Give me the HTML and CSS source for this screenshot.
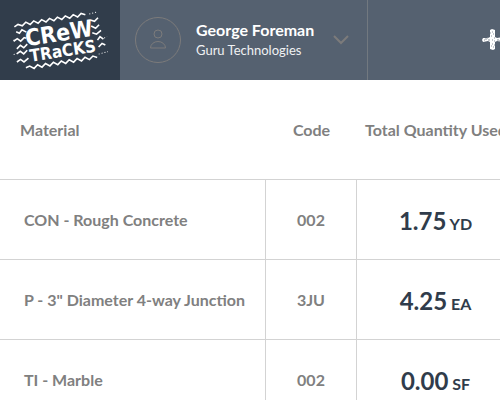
FILE: index.html
```html
<!DOCTYPE html>
<html lang="en">
<head>
    <meta charset="UTF-8">
    <meta name="viewport" content="width=device-width, initial-scale=1.0">
    <title>Crew Tracks - Materials</title>
    <link rel="stylesheet" href="styles.css">
</head>
<body>
    <header class="topbar">
        <a href="#" class="logo" aria-label="Crew Tracks">
            <svg width="96" height="64" viewBox="12 8 96 64">
                <g transform="rotate(-9 60 40)">
                    <text class="logo-crew" x="60" y="41" text-anchor="middle">CReW</text>
                    <text class="logo-tracks" x="61" y="57" text-anchor="middle">TRaCKS</text>
                    <g class="logo-waves">
                        <path d="M17 20l4-2 4 2 4-3 4 3 4-3 4 3 4-3 4 3 4-3 4 3 4-3 4 3 4-3 4 3 4-3 4 3 4-3 4 2"/>
                        <path d="M22 62l4-1 4 3 4-3 4 3 4-3 4 3 4-3 4 3 4-3 4 3 4-3 4 3 4-3 4 3 4-3 4 3 4-3 4 2"/>
                        <path d="M18 25l3 2 3-3 4 3M14 34l4-2 3 3 4-3 2 1M16 42l4-3 3 3 4-3M15 47l4-2 3 3 4-3M14 55l4-2 3 3 5-3"/>
                        <path d="M93 25l4 2 4-3M93 31l4 3 4-3M93 38l4 2 5-3M97 46l3-3 3 3M97 53l4-3 3 2"/>
                        <path class="speckle" d="M93 19l9-1M96 60l10-1M11 33h4M12 47h3M104 45l3-1"/>
                    </g>
                </g>
            </svg>
        </a>
        <button type="button" class="account">
            <svg class="avatar" width="48" height="48" viewBox="0 0 48 48">
                <circle cx="24" cy="24" r="22.5"/>
                <circle cx="24" cy="18" r="4"/>
                <path d="M16.500 32a7.500 6.500 0 0 1 15 0z"/>
            </svg>
            <span class="account-text">
                <span class="account-name">George Foreman</span>
                <span class="account-company">Guru Technologies</span>
            </span>
            <svg class="chevron" width="16" height="10" viewBox="0 0 16 10">
                <path d="M1 1l7 7 7-7"/>
            </svg>
        </button>
        <button type="button" class="add" aria-label="Add">
            <svg width="22" height="22" viewBox="0 0 22 22">
                <path d="M8 1l2-1 3 1v7l2 1 5-1 2 2-1 3-6-1-2 1v7l-2 1-3-1v-7l-2-1-5 1-1-2 1-2 5 0 2-1z" fill="#fff"/>
                <path class="grain" d="M10 3h1M11 5h1M9 7h1M3 10h2M6 11h2M10 11h1M12 9h1M15 11h2M18 10h1M10 15h1M11 18h1M9 17h1M2 11h1M12 12h1M8 4h1M12 16h1M5 9h1M17 12h2"/>
            </svg>
        </button>
    </header>

    <main class="content">
        <table class="materials">
            <thead>
                <tr>
                    <th class="col-material">Material</th>
                    <th class="col-code">Code</th>
                    <th class="col-total">Total Quantity Used</th>
                </tr>
            </thead>
            <tbody>
                <tr>
                    <td>CON - Rough Concrete</td>
                    <td>002</td>
                    <td><span class="amount">1.75</span> YD</td>
                </tr>
                <tr>
                    <td>P - 3" Diameter 4-way Junction</td>
                    <td>3JU</td>
                    <td><span class="amount">4.25</span> EA</td>
                </tr>
                <tr>
                    <td>TI - Marble</td>
                    <td>002</td>
                    <td><span class="amount">0.00</span> SF</td>
                </tr>
            </tbody>
        </table>
    </main>
</body>
</html>
```

FILE: styles.css
```css
* {
    margin: 0;
    padding: 0;
    box-sizing: border-box;
}

body {
    font-family: Lato, sans-serif;
    font-size: 16px;
    color: #808080;
    background-color: #fff;
    overflow: hidden;
}

button {
    font-family: inherit;
    background: none;
    border: none;
    cursor: pointer;
}

/* Top bar */
.topbar {
    display: flex;
    height: 80px;
    background-color: #556170;
    overflow: hidden;
}

.logo {
    flex: none;
    display: flex;
    align-items: center;
    justify-content: center;
    width: 120px;
    background-color: #313d4b;
}

.logo-crew,
.logo-tracks {
    font-family: "DejaVu Sans Condensed", "DejaVu Sans", sans-serif;
    font-weight: bold;
    fill: #fff;
}

.logo-crew {
    font-size: 23px;
}

.logo-tracks {
    font-size: 17px;
}

.logo-waves {
    fill: none;
    stroke: #fff;
    stroke-width: 1.6;
}

.speckle {
    stroke-width: 1;
    stroke-dasharray: 1 2;
}

.account {
    flex: none;
    display: flex;
    align-items: center;
    width: 248px;
    padding: 0 18px 0 14px;
    border-right: 1px solid #727980;
    text-align: left;
    color: #fff;
}

.avatar,
.chevron {
    flex: none;
    fill: none;
    stroke: #7c7b7b;
}

.chevron {
    stroke-width: 2;
}

.account-text {
    flex: 1;
    padding-left: 14px;
}

.account-name,
.account-company {
    display: block;
    line-height: 20px;
    white-space: nowrap;
}

.account-name {
    font-size: 16px;
    font-weight: bold;
}

.account-company {
    font-size: 13px;
    color: #f0f1f3;
}

.add {
    flex: none;
    display: flex;
    align-items: center;
    padding: 0 114px;
}

.grain {
    stroke: #8d959f;
}

/* Materials table */
.materials {
    border-collapse: separate;
    border-spacing: 0;
    table-layout: fixed;
    width: 100%;
    min-width: 515px;
    font-weight: bold;
}

.col-material {
    width: auto;
}

.col-code {
    width: 91px;
}

.col-total {
    width: 158px;
}

th,
td {
    border-bottom: 1px solid #d3d3d3;
    text-align: center;
    white-space: nowrap;
}

th {
    height: 100px;
}

td {
    height: 80px;
    border-right: 1px solid #d3d3d3;
}

th:first-child {
    padding-left: 20px;
    text-align: left;
}

td:first-child {
    padding-left: 24px;
    text-align: left;
}

td:last-child {
    padding-top: 2px;
    color: #303c4b;
}

.amount {
    font-size: 24px;
}
```
